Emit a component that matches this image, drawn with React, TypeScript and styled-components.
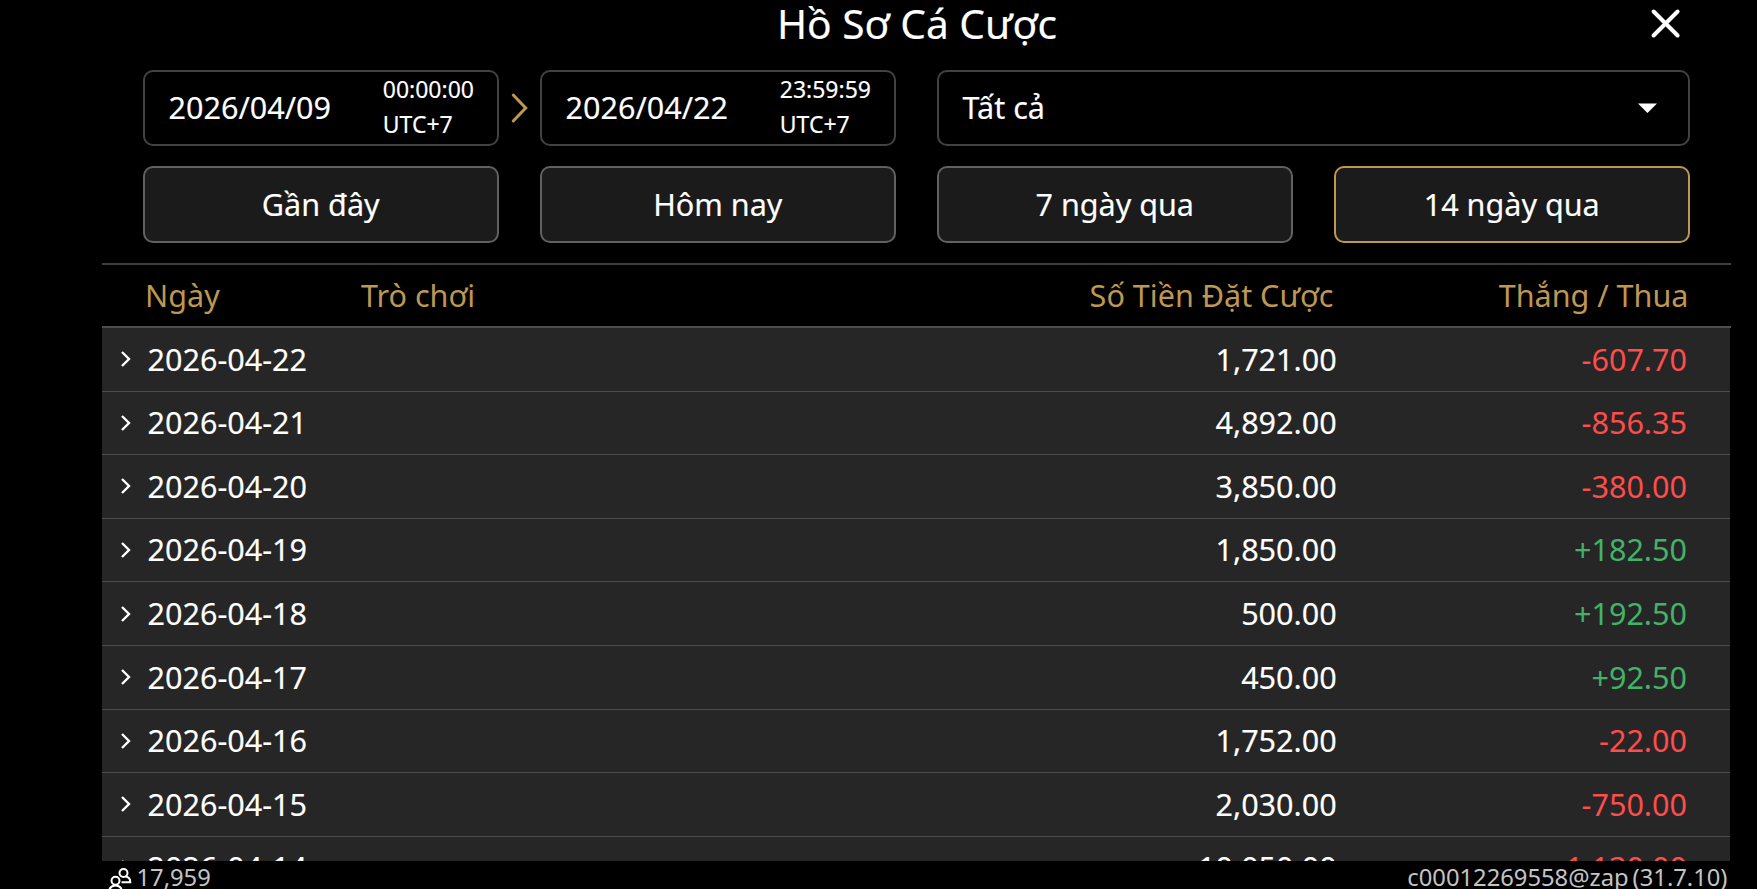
import React from "react";
import styled, { createGlobalStyle } from "styled-components";

const gold = "#be9752";
const red = "#ff4c4c";
const green = "#42b368";

const GlobalStyle = createGlobalStyle`
  *, *::before, *::after { box-sizing: border-box; }
  html, body { margin: 0; background: #000; overflow: hidden; }
`;

const Screen = styled.div`
  width: 1757px;
  height: 889px;
  display: flex;
  flex-direction: column;
  overflow: hidden;
  background: #000;
  color: #fff;
  font-family: "Noto Sans", sans-serif;
  font-size: 30.55px;
  white-space: nowrap;
`;

const TitleBar = styled.header`
  height: 70px;
  flex: none;
  display: grid;
  grid-template-columns: 1fr auto 1fr;
  align-items: start;
  padding: 0 75px 0 152px;
`;

const Title = styled.h1`
  grid-column: 2;
  margin: 0;
  font-size: 40.7px;
  line-height: 46px;
  font-weight: 400;
  -webkit-text-stroke: 0.15px;
`;

const CloseButton = styled.button`
  justify-self: end;
  width: 32px;
  height: 32px;
  margin-top: 7px;
  padding: 0;
  border: 0;
  background: none;
  svg { display: block; }
`;

const Filters = styled.section`
  flex: none;
  height: 193px;
  display: grid;
  grid-template-columns: repeat(4, 355.5px);
  grid-template-rows: 76px 77px;
  column-gap: 41.5px;
  row-gap: 20px;
  padding-left: 143px;
  -webkit-text-stroke: 0.15px;
`;

const Field = styled.div<{ $span?: number }>`
  grid-column: span ${(p) => p.$span ?? 1};
  display: flex;
  align-items: center;
  border: 2px solid #424242;
  border-radius: 10px;
  padding: 0 22.5px 0 23.5px;
`;

const FieldText = styled.span`
  line-height: 42px;
  margin-top: -2px;
`;

const TimeStack = styled.span`
  margin-left: auto;
  font-size: 23px;
  line-height: 35px;
  margin-top: -2px;
  display: flex;
  flex-direction: column;
`;

const RangeArrow = styled.svg`
  flex: none;
  margin-right: -55px;
  margin-left: 37px;
  overflow: visible;
`;

const Caret = styled.svg`
  margin-left: auto;
  margin-right: 8.5px;
`;

const RangeButton = styled.button<{ $active?: boolean }>`
  border: 2px solid ${(p) => (p.$active ? gold : "#616161")};
  border-radius: 10px;
  background: #1b1b1b;
  color: #fff;
  font: inherit;
  line-height: 42px;
  padding: 0 0 2px;
`;

const TableHead = styled.div`
  flex: none;
  height: 65px;
  margin-left: 102px;
  width: 1629px;
  display: grid;
  grid-template-columns: 216px 1fr 1fr 355px;
  align-items: center;
  border-top: 2px solid #3e3e3e;
  border-bottom: 2px solid #4d4d4d;
  color: ${gold};
  padding: 0 42.5px 2px 43px;
`;

const HeadCell = styled.span<{ $end?: boolean }>`
  text-align: ${(p) => (p.$end ? "right" : "left")};
`;

const TableBody = styled.div`
  flex: none;
  height: 533px;
  margin-left: 102px;
  width: 1628px;
  overflow: hidden;
  background: #262626;
`;

const Row = styled.div`
  height: 63.6px;
  display: grid;
  grid-template-columns: 45.5px 1fr 300px 350.3px;
  align-items: center;
  padding-right: 43px;
  border-bottom: 1px solid #4c4c4c;
`;

const RowArrow = styled.svg`
  margin-left: 18px;
`;

const DateCell = styled.span`
  padding-bottom: 1.5px;
  -webkit-text-stroke: 0.15px;
`;

const Amount = styled.span<{ $tone?: string }>`
  padding-bottom: 1.5px;
  text-align: right;
  color: ${(p) => p.$tone ?? "#fff"};
  -webkit-text-stroke: ${(p) => (p.$tone ? "0" : "0.15px")};
`;

const Footer = styled.footer`
  flex: none;
  height: 28px;
  display: flex;
  justify-content: space-between;
  padding: 0 29.5px 0 108px;
  overflow: hidden;
  font-size: 23.75px;
  line-height: 33px;
  color: #c4c4c4;
`;

const Online = styled.div`
  display: flex;
  gap: 4.5px;
  svg { margin-top: 6px; }
`;

const Account = styled.div`
  display: flex;
  gap: 4px;
`;

const days: [string, string, string][] = [
  ["2026-04-22", "1,721.00", "-607.70"],
  ["2026-04-21", "4,892.00", "-856.35"],
  ["2026-04-20", "3,850.00", "-380.00"],
  ["2026-04-19", "1,850.00", "+182.50"],
  ["2026-04-18", "500.00", "+192.50"],
  ["2026-04-17", "450.00", "+92.50"],
  ["2026-04-16", "1,752.00", "-22.00"],
  ["2026-04-15", "2,030.00", "-750.00"],
  ["2026-04-14", "10,050.00", "-1,130.00"],
];

const ranges = ["Gần đây", "Hôm nay", "7 ngày qua", "14 ngày qua"];

function DateField({ date, time, arrow }: { date: string; time: string; arrow?: boolean }) {
  return (
    <Field>
      <FieldText>{date}</FieldText>
      <TimeStack>
        <span>{time}</span>
        <span>UTC+7</span>
      </TimeStack>
      {arrow && (
        <RangeArrow width="18" height="30" viewBox="0 0 18 30" fill="none">
          <path d="M2.3 2 14.7 15 2.3 28" stroke={gold} strokeWidth="3" strokeLinecap="round" />
        </RangeArrow>
      )}
    </Field>
  );
}

export default function App() {
  return (
    <Screen>
      <GlobalStyle />
      <TitleBar>
        <Title>Hồ Sơ Cá Cược</Title>
        <CloseButton aria-label="Đóng">
          <svg width="32" height="32" viewBox="0 0 32 32">
            <path d="M3.6 4.5 27.6 28.5M27.6 4.5 3.6 28.5" stroke="#fff" strokeWidth="4" strokeLinecap="round" />
          </svg>
        </CloseButton>
      </TitleBar>
      <Filters>
        <DateField date="2026/04/09" time="00:00:00" arrow />
        <DateField date="2026/04/22" time="23:59:59" />
        <Field $span={2}>
          <FieldText>Tất cả</FieldText>
          <Caret width="19" height="10" viewBox="0 0 19 10">
            <path d="M0 0.5H19L9.5 10Z" fill="#fff" />
          </Caret>
        </Field>
        {ranges.map((label) => (
          <RangeButton key={label} $active={label === "14 ngày qua"}>
            {label}
          </RangeButton>
        ))}
      </Filters>
      <TableHead>
        <HeadCell>Ngày</HeadCell>
        <HeadCell>Trò chơi</HeadCell>
        <HeadCell $end>Số Tiền Đặt Cược</HeadCell>
        <HeadCell $end>Thắng / Thua</HeadCell>
      </TableHead>
      <TableBody>
        {days.map(([date, bet, result]) => (
          <Row key={date}>
            <RowArrow width="14" height="18" viewBox="0 0 14 18" fill="none">
              <path d="M2 2 9 9 2 16" stroke="#fff" strokeWidth="2.4" />
            </RowArrow>
            <DateCell>{date}</DateCell>
            <Amount>{bet}</Amount>
            <Amount $tone={result.startsWith("-") ? red : green}>{result}</Amount>
          </Row>
        ))}
      </TableBody>
      <Footer>
        <Online>
          <svg width="24" height="28" viewBox="0 0 24 28" fill="none" stroke="#fff" strokeWidth="2">
            <circle cx="15.5" cy="6" r="4" />
            <circle cx="7.5" cy="13.7" r="4" />
            <path d="M1 26C1 20.5 3.5 18.5 7.5 18.5S14 20.5 14 26M13.5 15.3H22.3C22.3 12 20.5 10 17.5 9.6" />
          </svg>
          <span>17,959</span>
        </Online>
        <Account>
          <span>c00012269558@zap</span>
          <span>(31.7.10)</span>
        </Account>
      </Footer>
    </Screen>
  );
}
